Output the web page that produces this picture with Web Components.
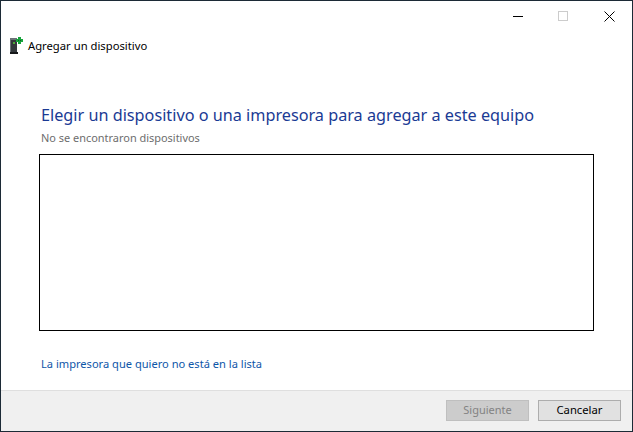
<!DOCTYPE html>
<html lang="es">
<head>
<meta charset="utf-8">
<title>Agregar un dispositivo</title>
<style>
  html, body { margin: 0; padding: 0; background: #fff; }
  body { font-family: "Noto Sans", "Open Sans", sans-serif; }
</style>
</head>
<body>
<wizard-window>
  <wizard-header slot="header">Agregar un dispositivo</wizard-header>
  <h-title slot="title">Elegir un dispositivo o una impresora para agregar a este equipo</h-title>
  <span slot="status">No se encontraron dispositivos</span>
  <device-list slot="list"></device-list>
  <span slot="link">La impresora que quiero no está en la lista</span>
  <wizard-button slot="buttons" disabled>Siguiente</wizard-button>
  <wizard-button slot="buttons">Cancelar</wizard-button>
</wizard-window>

<script>
class CaptionButtons extends HTMLElement {
  constructor() {
    super();
    this.shadowDOM = this.attachShadow({ mode: "open" });
    this.shadowDOM.innerHTML = `
    <style>
      :host { display: flex; justify-content: flex-end; height: 30px; }
      div { width: 45px; height: 30px; display: flex; align-items: center; justify-content: center; }
      svg { display: block; width: 11px; height: 11px; }
      .min { margin-right: 0; }
      .max { margin-right: 2px; }
      .max svg { width: 10px; height: 10px; }
    </style>
    <div class="min"><svg viewBox="0 0 11 11"><path d="M0.5 5.5h10" stroke="#000" fill="none" shape-rendering="crispEdges"/></svg></div>
    <div class="max"><svg viewBox="0 0 10 10"><rect x="0.5" y="0.5" width="9" height="9" stroke="#ccc" fill="none" shape-rendering="crispEdges"/></svg></div>
    <div><svg viewBox="0 0 11 11"><path d="M0.5 0.5l10 10M10.5 0.5l-10 10" stroke="#000" fill="none"/></svg></div>`;
  }
}

class WizardHeader extends HTMLElement {
  constructor() {
    super();
    this.shadowDOM = this.attachShadow({ mode: "open" });
    this.shadowDOM.innerHTML = `
    <style>
      :host { display: flex; align-items: center; gap: 4px; height: 24px; padding-left: 8px; font-size: 11.25px; color: #000; }
      svg { display: block; width: 15px; height: 18px; flex: none; }
      span { margin-top: -2px; }
    </style>
    <svg viewBox="0 0 15 18">
      <rect x="1" y="1" width="7" height="14" fill="#33383c"/>
      <rect x="1" y="1" width="7" height="2" fill="#6b7277"/>
      <rect x="1" y="1" width="1" height="14" fill="#6b7277"/>
      <rect x="4" y="5" width="2" height="2" fill="#4fa83a"/>
      <rect x="1" y="15" width="8" height="2" fill="#16181a"/>
      <path d="M9 0h3v2h2v3h-2v2H9V5H7V2h2z" fill="#17a43c"/>
      <path d="M9 3h1v1H9zM11 3h1v1h-1z" fill="#0c5c22"/>
    </svg>
    <span><slot></slot></span>`;
  }
}

class HTitle extends HTMLElement {
  constructor() {
    super();
    this.shadowDOM = this.attachShadow({ mode: "open" });
    this.shadowDOM.innerHTML = `
    <style>
      :host { display: block; font-size: 16.23px; line-height: 22px; color: #1a3a94; white-space: nowrap; }
    </style>
    <slot></slot>`;
  }
}

class DeviceList extends HTMLElement {
  constructor() {
    super();
    this.shadowDOM = this.attachShadow({ mode: "open" });
    this.shadowDOM.innerHTML = `
    <style>
      :host { display: block; box-sizing: border-box; height: 177px; border: 1px solid #000; background: #fff; }
    </style>`;
  }
}

class WizardButton extends HTMLElement {
  constructor() {
    super();
    this.shadowDOM = this.attachShadow({ mode: "open" });
    this.shadowDOM.innerHTML = `
    <style>
      :host { display: flex; box-sizing: border-box; width: 83px; height: 21px; padding-bottom: 2px; align-items: center; justify-content: center;
        border: 1px solid #adadad; background: #e1e1e1; font-size: 11.25px; color: #000; }
      :host([disabled]) { border-color: #bfbfbf; background: #ccc; color: #838383; font-size: 11px; }
    </style>
    <slot></slot>`;
  }
}

class WizardWindow extends HTMLElement {
  constructor() {
    super();
    this.shadowDOM = this.attachShadow({ mode: "open" });
    this.shadowDOM.innerHTML = `
    <style>
      :host { display: flex; flex-direction: column; box-sizing: border-box; width: 633px; height: 432px;
        border: 1px solid #1c2a36; background: #fff; overflow: hidden; }
      .top { flex: none; }
      .head { padding-top: 3px; }
      .body { flex: 1; display: flex; flex-direction: column; padding: 0 38px; }
      .title { margin: 46px 0 0 2px; }
      .status { margin: 4px 0 0 2px; font-size: 10.95px; line-height: 16px; color: #6d6d6d; }
      .list { margin-top: 8px; }
      .link { margin: 25px 0 0 2px; font-size: 11.1px; line-height: 16px; color: #0e56a8; }
      .foot { flex: none; box-sizing: border-box; height: 41px; display: flex; justify-content: flex-end; gap: 9px;
        padding: 9px 11px 0 0; background: #f0f0f0; border-top: 1px solid #dfdfdf; }
    </style>
    <caption-buttons class="top"></caption-buttons>
    <div class="head"><slot name="header"></slot></div>
    <div class="body">
      <div class="title"><slot name="title"></slot></div>
      <div class="status"><slot name="status"></slot></div>
      <div class="list"><slot name="list"></slot></div>
      <div class="link"><slot name="link"></slot></div>
    </div>
    <div class="foot"><slot name="buttons"></slot></div>`;
  }
}

customElements.define("caption-buttons", CaptionButtons);
customElements.define("wizard-header", WizardHeader);
customElements.define("h-title", HTitle);
customElements.define("device-list", DeviceList);
customElements.define("wizard-button", WizardButton);
customElements.define("wizard-window", WizardWindow);
</script>
</body>
</html>
